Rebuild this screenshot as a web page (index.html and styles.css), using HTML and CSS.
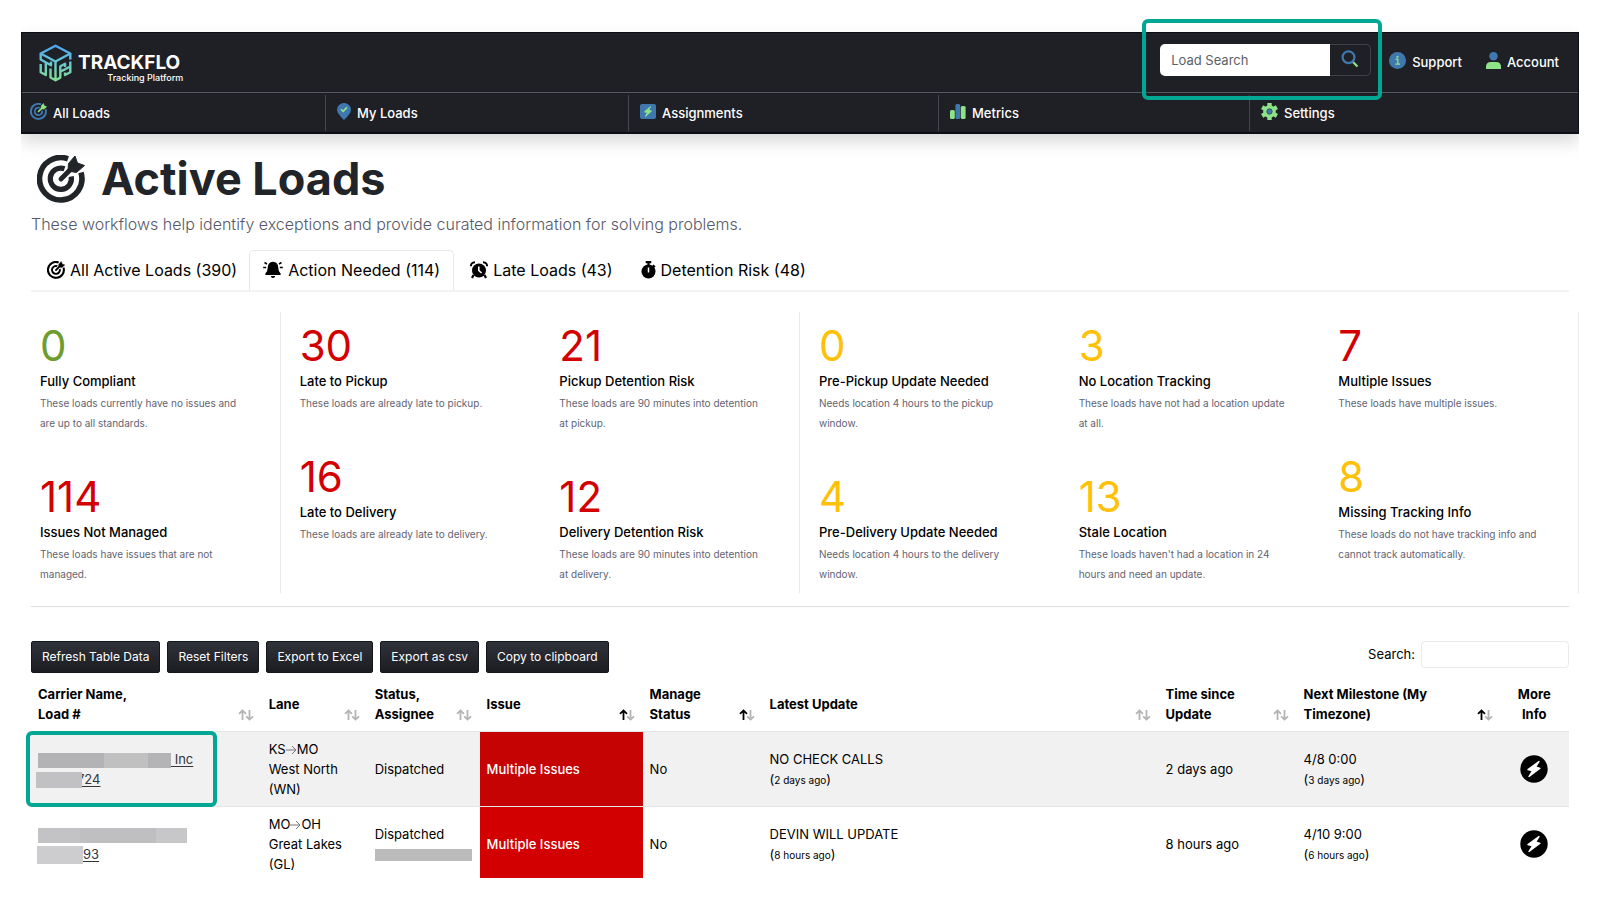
FILE: index.html
```html
<!DOCTYPE html>
<html lang="en">
<head>
<meta charset="utf-8">
<title>Trackflo – Active Loads</title>
<link rel="stylesheet" href="styles.css">
</head>
<body>
<svg class="sprite" aria-hidden="true">
  <symbol id="i-target" viewBox="0 0 48 48">
    <path class="ring" d="M31 3.800A21.200 21.200 0 1 0 44 17.500" fill="none" stroke="currentColor" stroke-width="5.600"/>
    <path class="ring" d="M27.500 13.800A10.600 10.600 0 1 0 34.200 21.500" fill="none" stroke="currentColor" stroke-width="5.200"/>
    <path class="dart" d="M24 24L35 13" fill="none" stroke="currentColor" stroke-width="4.800" stroke-linecap="round"/>
    <path class="dart-fill" d="M31 16L31.500 8.500L38 1L40.500 8L47.500 10.500L39.500 17.500Z" fill="currentColor" stroke="currentColor" stroke-linejoin="round"/>
  </symbol>
  <symbol id="i-sort" viewBox="0 0 16 12">
    <path class="up" d="M4.500 11V1.500M1 4.800L4.500 1.400L8 4.800" fill="none" stroke-width="1.800"/>
    <path class="down" d="M11.500 1V10.500M8.200 7.300L11.500 10.600L15 7.300" fill="none" stroke-width="1.800"/>
  </symbol>
  <symbol id="i-bolt" viewBox="0 0 28 28">
    <circle cx="14" cy="14" r="13.700" fill="#000"/>
    <path d="M19 6.500L8 14.500L12.500 15.800L9 21.500L20 13.300L15.500 12Z" fill="#fff" stroke="#fff" stroke-width="1.400" stroke-linejoin="round"/>
  </symbol>
</svg>

<div class="app">
  <header class="header">
    <div class="topbar">
      <a class="brand" href="#">
        <svg class="brand-mark" viewBox="0 0 33 38" aria-hidden="true">
          <defs><linearGradient id="g" gradientUnits="userSpaceOnUse" x1="0" y1="0" x2="0" y2="38"><stop offset="0" stop-color="#4ea3f5"/><stop offset="0.45" stop-color="#62c5d4"/><stop offset="1" stop-color="#86e08c"/></linearGradient></defs>
          <g fill="none" stroke="url(#g)" stroke-width="2.400" stroke-linejoin="round">
            <path d="M16.500 1.800L31.300 9.500L16.500 17.500L1.700 9.500Z"/>
            <path d="M1.700 9.500V15.500L12 21.300V17.500M6.800 18.500V31L1.700 28.300V20"/>
            <path d="M11.500 24.500V33.500L16.500 36.200V17.500M16.500 36.200L21.300 33.600V22.300L27 19.300"/>
            <path d="M31.300 9.500V15.500M31.300 17.500V22.500L26 25.300L21.300 27.500M31.300 22V28.300L26 31V28.500M26 20V23"/>
          </g>
        </svg>
        <span class="brand-text"><span class="brand-name">TRACKFLO</span><span class="brand-sub">Tracking Platform</span></span>
      </a>
      <div class="top-actions">
        <form class="load-search" role="search">
          <input class="load-input" type="text" placeholder="Load Search" aria-label="Load Search">
          <button class="load-btn" type="button" aria-label="Search loads">
            <svg width="18" height="18" viewBox="0 0 18 18"><path d="M11.500 11.500L16.500 16.500" stroke="#8ee287" stroke-width="2.200"/><circle cx="7.500" cy="7.200" r="5.900" fill="none" stroke="#3f78ae" stroke-width="2.200"/></svg>
          </button>
          <span class="callout callout-search"></span>
        </form>
        <a class="top-link" href="#">
          <svg width="17" height="17" viewBox="0 0 17 17"><circle cx="8.500" cy="8.500" r="8.500" fill="#3f78ae"/><path d="M6.500 7.200H8.800V12M6.300 12.200H11" stroke="#8ee287" stroke-width="1.300" fill="none"/><circle cx="8.500" cy="4.800" r="1.100" fill="#8ee287"/></svg>
          Support</a>
        <a class="top-link" href="#">
          <svg width="15" height="17" viewBox="0 0 15 17"><circle cx="7.500" cy="4.300" r="4.200" fill="#3f78ae"/><path d="M0 17V15Q0 10 5 10H10Q15 10 15 15V17Z" fill="#8ee287"/></svg>
          Account</a>
      </div>
    </div>
    <nav class="nav">
      <a class="nav-item" href="#"><svg class="two-tone" width="17" height="17"><use href="#i-target"/></svg>All Loads</a>
      <a class="nav-item" href="#"><svg width="14" height="17" viewBox="0 0 14 17"><path d="M7 17Q0 10.500 0 6.500A7 6.500 0 0 1 14 6.500Q14 10.500 7 17Z" fill="#3f78ae"/><path d="M4 6.300L6.200 8.300L10 4.300" fill="none" stroke="#8ee287" stroke-width="1.700"/></svg>My Loads</a>
      <a class="nav-item" href="#"><svg width="16" height="17" viewBox="0 0 16 17"><rect y="1" width="16" height="15" rx="2" fill="#3f78ae"/><path d="M10.500 3.500L4.500 8.800L7.500 9.500L5.500 13.500L11.500 8L8.500 7.300Z" fill="#8ee287" stroke="#8ee287"/></svg>Assignments</a>
      <a class="nav-item" href="#"><svg width="16" height="17" viewBox="0 0 16 17"><rect y="7" width="4.800" height="9" rx="1.500" fill="#8ee287"/><rect x="5.400" y="1" width="4.800" height="15" rx="1.500" fill="#3f78ae"/><rect x="10.800" y="3" width="4.800" height="13" rx="1.500" fill="#8ee287"/></svg>Metrics</a>
      <a class="nav-item" href="#"><svg width="17" height="17" viewBox="0 0 17 17"><g stroke="#8ee287" stroke-width="4.400"><path d="M8.500 0V17M1.100 4.200L15.900 12.800M15.900 4.200L1.100 12.800"/></g><circle cx="8.500" cy="8.500" r="6.300" fill="#8ee287"/><circle cx="8.500" cy="8.500" r="2.700" fill="#3f78ae" stroke="#1f4a4a" stroke-width=".8"/></svg>Settings</a>
    </nav>
  </header>

  <main class="main">
    <h1 class="title"><svg width="48" height="48" aria-hidden="true"><use href="#i-target"/></svg>Active Loads</h1>
    <p class="subtitle">These workflows help identify exceptions and provide curated information for solving problems.</p>

    <nav class="tabs">
      <a class="tab" href="#"><svg width="18" height="18"><use href="#i-target"/></svg>All Active Loads (390)</a>
      <a class="tab tab-active" href="#" aria-current="page"><svg width="20" height="18" viewBox="0 0 20 18"><path d="M10 .8Q15.200 1 15.300 7Q15.300 10.500 17.600 12.500V14H2.400V12.500Q4.700 10.500 4.700 7Q4.800 1 10 .8Z"/><path d="M7.800 15H12.200Q12 17 10 17Q8 17 7.800 15Z"/><path d="M1.500 1.500L4 3M.2 6.500H3.200M18.500 1.500L16 3M19.800 6.500H16.800" stroke="#000" stroke-width="1.500"/></svg>Action Needed (114)</a>
      <a class="tab" href="#"><svg width="18" height="18" viewBox="0 0 18 18"><circle cx="9" cy="9.500" r="7"/><path d="M3.500 14L2 17M14.500 14L16 17" stroke="#000" stroke-width="2.200"/><path d="M1 5.200Q.8 1.500 5 1.300M17 5.200Q17.200 1.500 13 1.300" fill="none" stroke="#000" stroke-width="2"/><path d="M8.800 5.500V9.500L11.500 12" fill="none" stroke="#fff" stroke-width="1.600"/></svg>Late Loads (43)</a>
      <a class="tab" href="#"><svg width="15" height="18" viewBox="0 0 15 18"><circle cx="7.500" cy="10.500" r="7"/><path d="M4.700 1.200H10.300M7.500 1V5M11.800 4.300L13.800 6.300" stroke="#000" stroke-width="2.200"/><path d="M7.500 6.500V11.500" stroke="#fff" stroke-width="1.500"/></svg>Detention Risk (48)</a>
    </nav>

    <section class="stats">
      <div class="stat-col divided">
        <div class="stat"><div class="num green">0</div><div class="label">Fully Compliant</div><p class="desc">These loads currently have no issues and are up to all standards.</p></div>
        <div class="stat"><div class="num red">114</div><div class="label">Issues Not Managed</div><p class="desc">These loads have issues that are not managed.</p></div>
      </div>
      <div class="stat-col">
        <div class="stat"><div class="num red">30</div><div class="label">Late to Pickup</div><p class="desc">These loads are already late to pickup.</p></div>
        <div class="stat"><div class="num red">16</div><div class="label">Late to Delivery</div><p class="desc">These loads are already late to delivery.</p></div>
      </div>
      <div class="stat-col divided">
        <div class="stat"><div class="num red">21</div><div class="label">Pickup Detention Risk</div><p class="desc">These loads are 90 minutes into detention at pickup.</p></div>
        <div class="stat"><div class="num red">12</div><div class="label">Delivery Detention Risk</div><p class="desc">These loads are 90 minutes into detention at delivery.</p></div>
      </div>
      <div class="stat-col">
        <div class="stat"><div class="num amber">0</div><div class="label">Pre-Pickup Update Needed</div><p class="desc">Needs location 4 hours to the pickup window.</p></div>
        <div class="stat"><div class="num amber">4</div><div class="label">Pre-Delivery Update Needed</div><p class="desc">Needs location 4 hours to the delivery window.</p></div>
      </div>
      <div class="stat-col">
        <div class="stat"><div class="num amber">3</div><div class="label">No Location Tracking</div><p class="desc">These loads have not had a location update at all.</p></div>
        <div class="stat"><div class="num amber">13</div><div class="label">Stale Location</div><p class="desc">These loads haven't had a location in 24 hours and need an update.</p></div>
      </div>
      <div class="stat-col divided">
        <div class="stat"><div class="num red">7</div><div class="label">Multiple Issues</div><p class="desc">These loads have multiple issues.</p></div>
        <div class="stat"><div class="num amber">8</div><div class="label">Missing Tracking Info</div><p class="desc">These loads do not have tracking info and cannot track automatically.</p></div>
      </div>
    </section>
    <hr class="rule">

    <div class="toolbar">
      <div class="buttons">
        <button class="btn" type="button">Refresh Table Data</button>
        <button class="btn" type="button">Reset Filters</button>
        <button class="btn" type="button">Export to Excel</button>
        <button class="btn" type="button">Export as csv</button>
        <button class="btn" type="button">Copy to clipboard</button>
      </div>
      <div class="filter"><label for="q">Search:</label><input id="q" class="filter-input" type="search"></div>
    </div>

    <table class="table">
      <colgroup><col class="c-carrier"><col class="c-lane"><col class="c-status"><col class="c-issue"><col class="c-manage"><col class="c-latest"><col class="c-time"><col class="c-next"><col class="c-more"></colgroup>
      <thead><tr>
        <th><div class="th"><span>Carrier Name,<br>Load #</span><svg class="sort"><use href="#i-sort"/></svg></div></th>
        <th><div class="th"><span>Lane</span><svg class="sort"><use href="#i-sort"/></svg></div></th>
        <th><div class="th"><span>Status,<br>Assignee</span><svg class="sort"><use href="#i-sort"/></svg></div></th>
        <th aria-sort="ascending"><div class="th"><span>Issue</span><svg class="sort asc"><use href="#i-sort"/></svg></div></th>
        <th aria-sort="ascending"><div class="th"><span>Manage<br>Status</span><svg class="sort asc"><use href="#i-sort"/></svg></div></th>
        <th><div class="th"><span>Latest Update</span><svg class="sort"><use href="#i-sort"/></svg></div></th>
        <th><div class="th"><span>Time since<br>Update</span><svg class="sort"><use href="#i-sort"/></svg></div></th>
        <th aria-sort="ascending"><div class="th"><span>Next Milestone (My<br>Timezone)</span><svg class="sort asc"><use href="#i-sort"/></svg></div></th>
        <th class="center">More<br>Info</th>
      </tr></thead>
      <tbody>
        <tr class="shaded">
          <td class="carrier">
            <a href="#"><span class="mask mask-name"></span> Inc</a><br>
            <a href="#"><span class="mask mask-id"></span>724</a>
            <span class="callout callout-carrier"></span>
          </td>
          <td>KS<svg class="arrow" viewBox="0 0 11 10"><path d="M0 5H10M6 1L10 5L6 9"/></svg>MO<br>West North<br>(WN)</td>
          <td>Dispatched</td>
          <td class="issue">Multiple Issues</td>
          <td>No</td>
          <td>NO CHECK CALLS<br>(<small>2 days ago</small>)</td>
          <td>2 days ago</td>
          <td>4/8 0:00<br>(<small>3 days ago</small>)</td>
          <td class="center"><button class="more" type="button" aria-label="More info"><svg width="28" height="28"><use href="#i-bolt"/></svg></button></td>
        </tr>
        <tr>
          <td class="carrier">
            <a href="#"><span class="mask mask-name wide"></span></a><br>
            <a href="#"><span class="mask mask-id light"></span>93</a>
          </td>
          <td>MO<svg class="arrow" viewBox="0 0 11 10"><path d="M0 5H10M6 1L10 5L6 9"/></svg>OH<br>Great Lakes<br>(GL)</td>
          <td>Dispatched<br><span class="mask mask-person"></span></td>
          <td class="issue">Multiple Issues</td>
          <td>No</td>
          <td>DEVIN WILL UPDATE<br>(<small>8 hours ago</small>)</td>
          <td>8 hours ago</td>
          <td>4/10 9:00<br>(<small>6 hours ago</small>)</td>
          <td class="center"><button class="more" type="button" aria-label="More info"><svg width="28" height="28"><use href="#i-bolt"/></svg></button></td>
        </tr>
      </tbody>
    </table>
  </main>
</div>
</body>
</html>
```
FILE: styles.css
```css
* { box-sizing: border-box; }
body {
  margin: 0;
  background: #fff;
  color: #000;
  font: 400 13px/20px Inter, "Liberation Sans", sans-serif;
}
p, h1 { margin: 0; }
a { color: inherit; text-decoration: none; }
button, input { font: inherit; }
.sprite { position: absolute; width: 0; height: 0; }
.app { padding: 32px 21px 20px; }

/* Header */
.header {
  background: #1f2026;
  color: #fff;
  border: 1px solid #0b0e16;
  border-bottom-width: 2px;
  box-shadow: 0 8px 16px rgba(0, 0, 0, .15);
  clip-path: inset(-32px 0 -32px 0);
}
.topbar {
  display: flex;
  justify-content: space-between;
  align-items: center;
  height: 60px;
  padding: 0 19px 0 17px;
  border-bottom: 1px solid #565a60;
}
.brand { display: flex; align-items: center; gap: 6px; }
.brand-mark { width: 33px; height: 38px; }
.brand-text { display: flex; flex-direction: column; align-items: flex-end; padding-top: 11px; }
.brand-name { padding-right: 3px; font-size: 19px; font-weight: 700; line-height: 19px; }
.brand-sub { font-size: 9px; font-weight: 500; line-height: 11px; }
.top-actions { display: flex; align-items: center; padding-bottom: 2px; }
.load-search { position: relative; display: flex; margin: 0 18px 3px 0; }
.load-input {
  width: 170px;
  height: 32px;
  padding: 0 11px;
  border: 0;
  border-radius: 5px 0 0 5px;
  background: #fff;
  font-size: 13px;
}
.load-input::placeholder { color: #5b5f66; opacity: 1; }
.load-btn {
  display: flex;
  align-items: center;
  justify-content: center;
  width: 41px;
  padding: 0 0 2px;
  border: 1px solid #3d4248;
  border-left: 0;
  border-radius: 0 5px 5px 0;
  background: transparent;
}
.callout { position: absolute; border: 4px solid #00a792; border-radius: 6px; pointer-events: none; z-index: 2; }
.callout-search { inset: -25px -11px -24px -18px; }
.top-link { display: flex; align-items: center; gap: 6px; margin-right: 24px; font-weight: 500; }
.top-link:last-child { margin-right: 0; }
.top-link svg { margin-bottom: 3px; }
.nav {
  display: grid;
  grid-template-columns: 303fr 303fr 310fr 311fr 329fr;
  height: 39px;
  padding: 2px 0 1px;
}
.nav-item {
  display: flex;
  align-items: center;
  gap: 6px;
  padding-left: 11px;
  font-weight: 500;
  border-left: 1px solid #43474e;
}
.nav-item:first-child { border-left: 0; padding-left: 8px; }
.nav-item svg { margin-bottom: 3px; }
.two-tone { color: #3f78ae; --dart: #8ee287; }
.dart, .dart-fill { color: var(--dart, currentColor); }

/* Page heading */
.main { padding: 0 10px; }
.title {
  display: flex;
  align-items: center;
  gap: 16px;
  margin-top: 16px;
  padding-left: 6px;
  color: #212429;
  font-size: 45px;
  font-weight: 700;
  line-height: 58px;
}
.subtitle { margin-top: 3px; color: #565869; font-size: 16px; font-weight: 300; line-height: 26px; }

/* Tabs */
.tabs { display: flex; margin-top: 13px; border-bottom: 2px solid #f2f3f4; }
.tab {
  display: flex;
  align-items: center;
  gap: 5px;
  height: 40px;
  padding: 0 11px 1px 15px;
  border: 1px solid transparent;
  border-bottom: 0;
  border-radius: 5px 5px 0 0;
  font-size: 16px;
}
.tab svg { margin-bottom: 1px; }
.tab-active { border-color: #e6e9ec; padding: 0 13px 1px; }

/* Status counters */
.stats { display: grid; grid-template-columns: repeat(6, 1fr); margin: 20px -10px 0; }
.stat-col { display: flex; flex-direction: column; gap: 39px; padding: 9px 32px 9px 19px; }
.divided { border-right: 1px solid #e8e9eb; }
.num { font-size: 42px; line-height: 50px; }
.green { color: #6f9c2f; }
.red { color: #d20000; }
.amber { color: #ffc107; }
.label { font-size: 13px; font-weight: 500; line-height: 20px; }
.desc { margin-top: 2px; color: #626472; font-size: 10px; line-height: 20px; }
.rule { margin: 13px 0 34px; border: 0; border-top: 1px solid #dddfe1; }

/* Table toolbar */
.toolbar { display: flex; justify-content: space-between; align-items: flex-start; }
.buttons { display: flex; gap: 7px; }
.btn {
  height: 32px;
  padding: 0 10px;
  border: 1px solid #15161b;
  border-radius: 2px;
  background: linear-gradient(#30323a, #1c1d22);
  color: #fff;
  font-size: 12px;
  font-weight: 400;
}
.filter { display: flex; align-items: center; gap: 6px; }
.filter label { padding-bottom: 2px; }
.filter-input { width: 148px; height: 27px; border: 1px solid #e8eaed; border-radius: 4px; background: #fff; }

/* Loads table */
.table { width: 100%; margin-top: 4px; border-collapse: collapse; table-layout: fixed; }
.c-carrier { width: 15.00%; }
.c-lane { width: 6.89%; }
.c-status { width: 7.28%; }
.c-issue { width: 10.60%; }
.c-manage { width: 7.80%; }
.c-latest { width: 25.75%; }
.c-time { width: 8.97%; }
.c-next { width: 13.26%; }
.c-more { width: 4.45%; }
th, td { padding: 7px; text-align: left; vertical-align: middle; }
th { padding-right: 8px; font-weight: 700; }
.th { display: flex; align-items: center; justify-content: space-between; min-height: 40px; }
.sort { flex: none; align-self: flex-end; width: 16px; height: 12px; margin-bottom: 3px; --up: #b4b4b4; }
.asc { --up: #000; }
.up { stroke: var(--up); }
.down { stroke: #b4b4b4; }
tbody tr { border-top: 1px solid #e3e5e8; }
tbody tr:last-child td { padding-bottom: 4px; }
.shaded { background: #f1f1f1; }
th.center, td.center { padding-right: 8px; text-align: center; }
.issue { background: #d20000; color: #fff; font-weight: 500; }
.shaded .issue { background: #c60303; }
small { font-size: 10px; }
.arrow { width: 11px; height: 10px; vertical-align: -1px; fill: none; stroke: #777; stroke-width: 1; }
.more { display: inline-flex; padding: 0; border: 0; background: none; vertical-align: middle; }
.carrier { position: relative; color: #33363b; }
.carrier a { text-decoration: underline; text-underline-offset: 2px; }
.mask { display: inline-block; position: relative; vertical-align: middle; background: #bbb; }
.mask-name {
  width: 133px;
  height: 15px;
  background: linear-gradient(90deg, #b3b3b5 50%, #c0c0c0 50% 83%, #b4b4b6 83%);
}
.mask-name.wide { width: 149px; background: linear-gradient(90deg, #c3c3c5 28%, #bfbfc1 28% 79%, #c7c7c9 79%); }
.mask-id { width: 46px; height: 16px; margin: 0 -5px 0 -2px; background: #c1c1c3; }
.mask-id.light { height: 18px; margin-right: 0; margin-left: -1px; background: #cdcdcf; }
.mask-person { width: 97px; height: 12px; }
.callout-carrier { inset: -1px auto -1px -5px; width: 191px; }
```
